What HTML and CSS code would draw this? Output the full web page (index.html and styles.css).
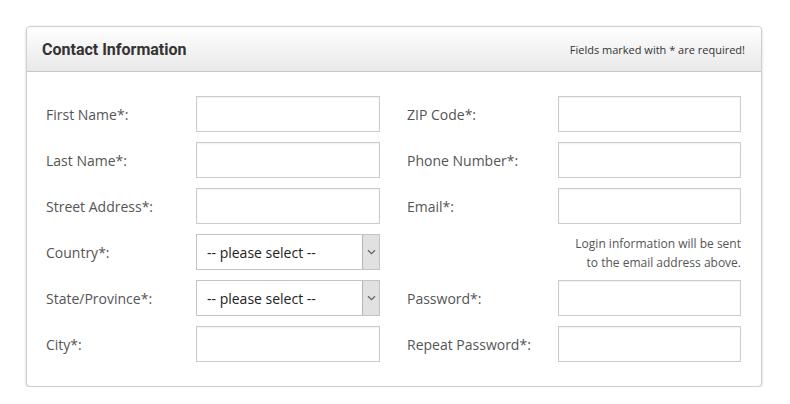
FILE: index.html
```html
<!DOCTYPE html>
<html>
<head>
<meta charset="utf-8">
<link rel="stylesheet" href="styles.css">
</head>
<body>
<div class="page">
  <div class="panel">
    <div class="panel-head">
      <h2 class="title">Contact Information</h2>
      <span class="note">Fields marked with * are required!</span>
    </div>
    <div class="form">
      <label class="label">First Name*:</label>
      <div class="input"></div>
      <label class="label label-r">ZIP Code*:</label>
      <div class="input"></div>

      <label class="label">Last Name*:</label>
      <div class="input"></div>
      <label class="label label-r">Phone Number*:</label>
      <div class="input"></div>

      <label class="label">Street Address*:</label>
      <div class="input"></div>
      <label class="label label-r">Email*:</label>
      <div class="input"></div>

      <label class="label">Country*:</label>
      <div class="select"><span class="select-text">-- please select --</span><span class="select-btn"><svg width="9" height="6" viewBox="0 0 9 6"><path d="M1 1.2 L4.5 4.6 L8 1.2" fill="none" stroke="#666" stroke-width="1.3"/></svg></span></div>
      <div class="info">Login information will be sent<br>to the email address above.</div>

      <label class="label">State/Province*:</label>
      <div class="select"><span class="select-text">-- please select --</span><span class="select-btn"><svg width="9" height="6" viewBox="0 0 9 6"><path d="M1 1.2 L4.5 4.6 L8 1.2" fill="none" stroke="#666" stroke-width="1.3"/></svg></span></div>
      <label class="label label-r">Password*:</label>
      <div class="input"></div>

      <label class="label">City*:</label>
      <div class="input"></div>
      <label class="label label-r">Repeat Password*:</label>
      <div class="input"></div>
    </div>
  </div>
</div>
</body>
</html>
```
FILE: styles.css
```css
* { box-sizing: border-box; }
body {
  margin: 0;
  background: #fff;
  font-family: "Open Sans", "Liberation Sans", sans-serif;
}
.page {
  padding: 26px 28px 0 26px;
}
.panel {
  width: 736px;
  border: 1px solid #cfcfcf;
  border-radius: 4px;
  box-shadow: 0 1px 3px rgba(0,0,0,0.18);
  background: #fff;
}
.panel-head {
  height: 45px;
  display: flex;
  align-items: center;
  justify-content: space-between;
  padding: 0 16px 0 15px;
  background: linear-gradient(#ffffff, #e8e8e8);
  border-bottom: 1px solid #c8c8c8;
  border-radius: 4px 4px 0 0;
}
.title {
  margin: 0;
  font-family: Roboto, "Liberation Sans", sans-serif;
  font-weight: 700;
  font-size: 16px;
  color: #333;
  letter-spacing: 0;
}
.note {
  font-size: 11px;
  color: #333;
}
.form {
  display: grid;
  grid-template-columns: 150px 184px 178px 183px;
  grid-auto-rows: 36px;
  row-gap: 10px;
  padding: 24px 20px 24px 19px;
}
.label {
  display: flex;
  align-items: center;
  font-size: 14px;
  color: #555;
}
.label-r { padding-left: 27px; }
.input {
  border: 1px solid #ccc;
  background: #fff;
  box-shadow: inset 0 1px 2px rgba(0,0,0,0.06);
}
.select {
  display: flex;
  border: 1px solid #c4c4c4;
  background: #fff;
}
.select-text {
  flex: 1;
  display: flex;
  align-items: center;
  padding-left: 10px;
  font-size: 14px;
  color: #222;
}
.select-btn {
  width: 17px;
  display: flex;
  align-items: center;
  justify-content: center;
  background: #e1e1e1;
  border-left: 1px solid #b5b5b5;
}
.info {
  grid-column: 3 / span 2;
  text-align: right;
  font-size: 12px;
  line-height: 19px;
  color: #555;
}
```
